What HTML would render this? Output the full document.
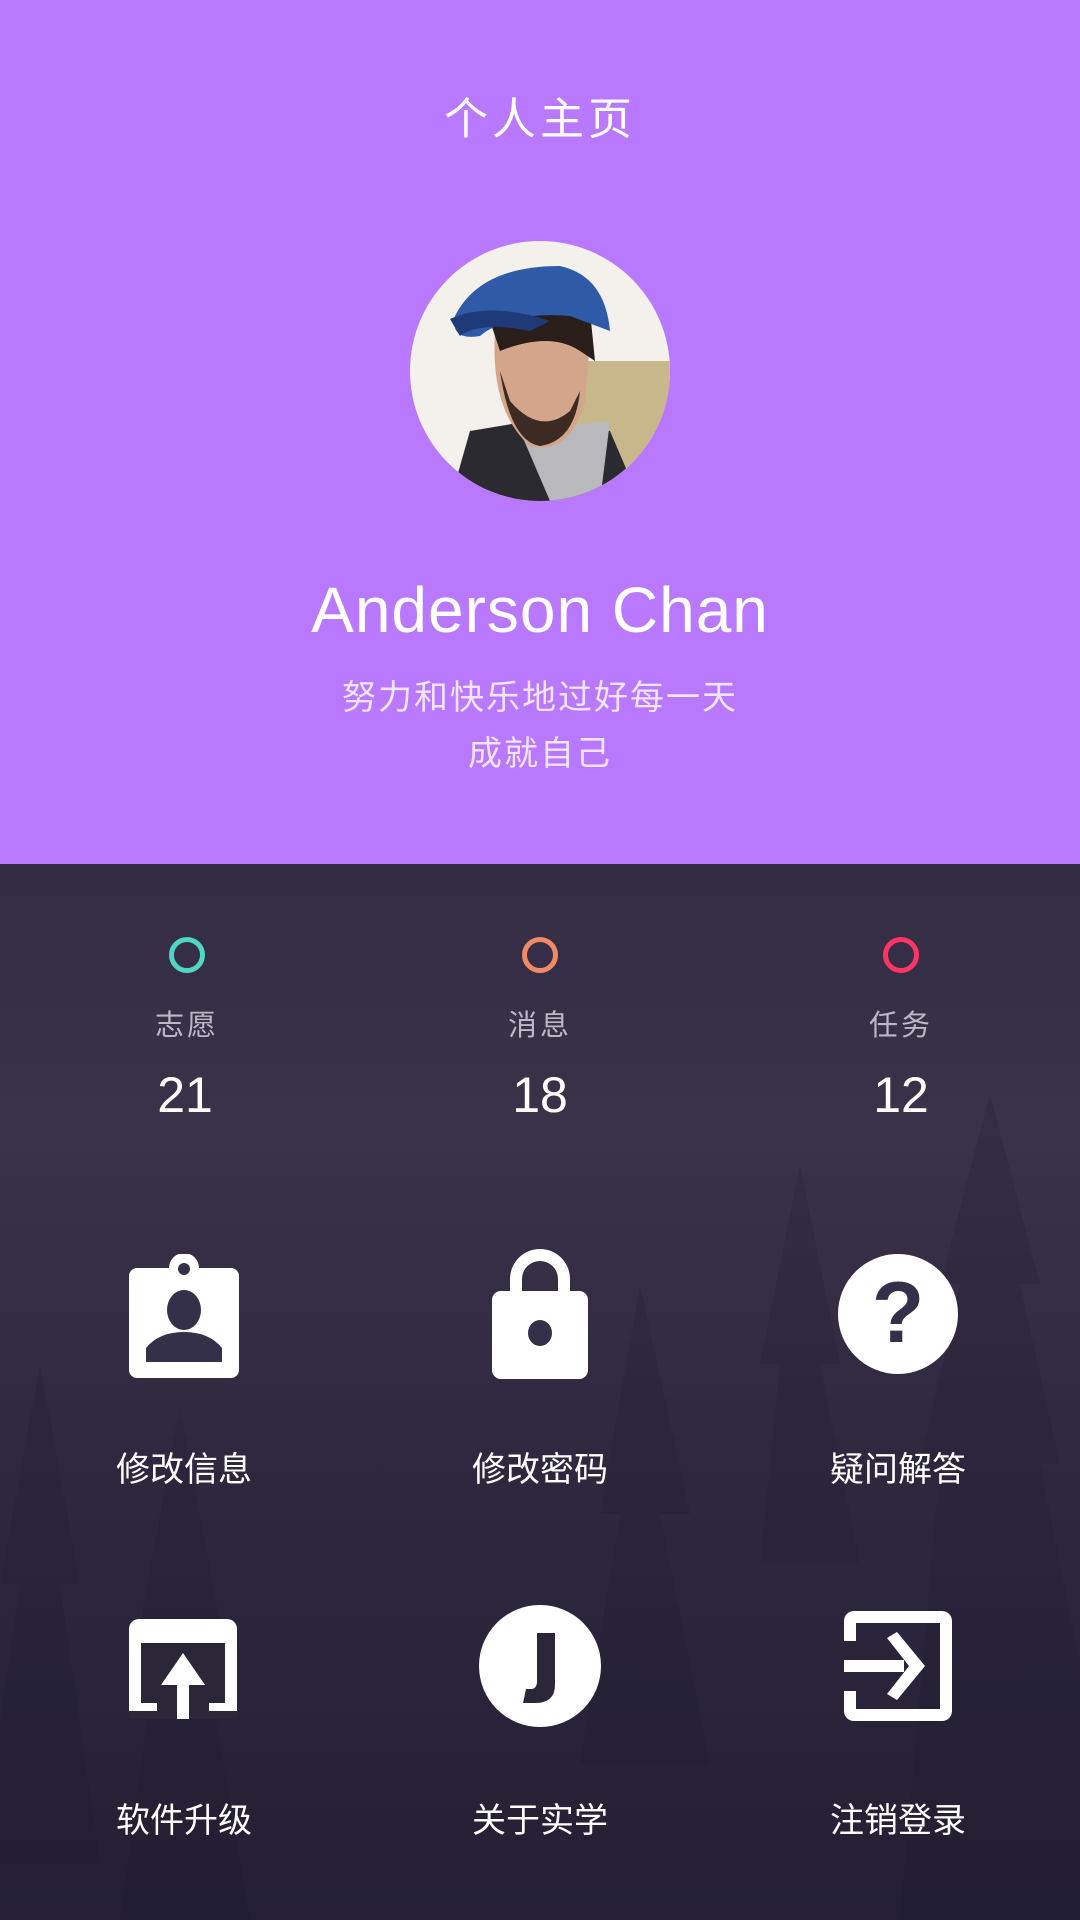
<!DOCTYPE html>
<html><head><meta charset="utf-8"><style>
*{margin:0;padding:0;box-sizing:border-box}
body{width:1080px;height:1920px;overflow:hidden;font-family:"Liberation Sans","Noto Sans CJK SC",sans-serif;position:relative}
.top{position:absolute;left:0;top:0;width:1080px;height:864px;background:#b879ff}
.bot{position:absolute;left:0;top:864px;width:1080px;height:1056px;background:linear-gradient(180deg,#332c44 0%,#3a3249 25%,#2f2940 55%,#241f33 100%)}
.t{position:absolute;left:0;width:1080px;text-align:center;color:#fff;white-space:nowrap}
.c{position:absolute;text-align:center;white-space:nowrap;transform:translateX(-50%)}
.ring{position:absolute;width:36px;height:36px;border-radius:50%;border:5px solid;transform:translate(-50%,-50%)}
svg.ic{position:absolute;transform:translate(-50%,-50%)}
</style></head><body>
<div class="top"></div>
<div class="bot">
<svg width="1080" height="1056" style="position:absolute;left:0;top:0;opacity:.18">
<g fill="#1e1a2a">
<path d="M990 230 L1040 420 L1020 420 L1060 600 L1040 600 L1080 800 L1080 1056 L900 1056 L940 600 L920 600 L960 420 L940 420Z"/>
<path d="M800 300 L840 500 L820 500 L860 700 L760 700 L780 500 L760 500Z"/>
<path d="M640 420 L690 650 L660 650 L710 900 L580 900 L620 650 L600 650Z"/>
<path d="M40 500 L80 720 L60 720 L100 1000 L-20 1000 L20 720 L0 720Z"/>
<path d="M180 540 L220 760 L200 760 L250 1056 L120 1056 L160 760 L140 760Z"/>
</g></svg>
</div>
<div class="t" style="top:90px;font-size:44px;letter-spacing:4px;line-height:60px">个人主页</div>
<svg style="position:absolute;left:410px;top:241px" width="260" height="260" viewBox="0 0 260 260">
<defs><clipPath id="cp"><circle cx="130" cy="130" r="130"/></clipPath></defs>
<circle cx="130" cy="130" r="130" fill="#f4f1ec"/>
<g clip-path="url(#cp)">
<rect x="150" y="120" width="110" height="140" fill="#c8b78a"/>
<path d="M40 260 L60 190 L120 180 L200 190 L230 260Z" fill="#2a2a30"/>
<path d="M110 190 L140 260 L190 260 L200 180Z" fill="#b9b9bd"/>
<path d="M85 90 Q80 170 120 205 Q160 215 175 160 L180 100Z" fill="#d3a58a"/>
<path d="M90 130 Q100 200 130 205 Q165 200 170 150 L160 170 Q130 195 100 160Z" fill="#3d2a22"/>
<path d="M80 80 Q90 60 180 70 L185 120 L170 110 Q140 90 90 110Z" fill="#2a1e1a"/>
<path d="M45 75 Q70 25 150 25 Q195 35 200 90 L160 75 Q100 70 70 95 Q40 100 45 75Z" fill="#2f5aa8"/>
<path d="M40 78 Q80 60 140 80 L120 90 Q70 80 50 95Z" fill="#1e3a78"/>
</g></svg>
<div class="t" style="top:572px;font-size:64px;line-height:76px;letter-spacing:1px">Anderson Chan</div>
<div class="t" style="top:674px;font-size:34px;line-height:48px;color:#f0e4ff;letter-spacing:2px">努力和快乐地过好每一天</div>
<div class="t" style="top:730px;font-size:34px;line-height:48px;color:#f0e4ff;letter-spacing:2px">成就自己</div>

<div class="ring" style="left:187px;top:955px;border-color:#4fd6c4"></div>
<div class="ring" style="left:540px;top:955px;border-color:#f08a64"></div>
<div class="ring" style="left:901px;top:955px;border-color:#ff3366"></div>
<div class="c" style="left:187px;top:1002px;font-size:29px;color:#bdb8c4;letter-spacing:3px">志愿</div>
<div class="c" style="left:540px;top:1002px;font-size:29px;color:#bdb8c4;letter-spacing:3px">消息</div>
<div class="c" style="left:901px;top:1002px;font-size:29px;color:#bdb8c4;letter-spacing:3px">任务</div>
<div class="c" style="left:185px;top:1066px;font-size:50px;color:#fff">21</div>
<div class="c" style="left:540px;top:1066px;font-size:50px;color:#fff">18</div>
<div class="c" style="left:901px;top:1066px;font-size:50px;color:#fff">12</div>

<svg class="ic" style="left:184px;top:1316px" width="110" height="124" viewBox="0 0 110 124">
<path d="M8 14 H40 A15 15 0 0 1 70 14 H102 A8 8 0 0 1 110 22 V116 A8 8 0 0 1 102 124 H8 A8 8 0 0 1 0 116 V22 A8 8 0 0 1 8 14Z" fill="#fff"/>
<circle cx="55" cy="15" r="6" fill="#35304a"/>
<ellipse cx="55" cy="56" rx="17" ry="20" fill="#35304a"/>
<path d="M17 108 V94 Q30 78 55 78 Q80 78 93 94 V108Z" fill="#35304a"/>
</svg>
<svg class="ic" style="left:540px;top:1314px" width="96" height="130" viewBox="0 0 96 130">
<path d="M18 42 V30 A30 30 0 0 1 78 30 V42 H66 V30 A18 18 0 0 0 30 30 V42Z" fill="#fff"/>
<rect x="0" y="42" width="96" height="88" rx="9" fill="#fff"/>
<ellipse cx="48" cy="84" rx="12" ry="13" fill="#35304a"/>
</svg>
<svg class="ic" style="left:898px;top:1314px" width="120" height="120" viewBox="0 0 120 120">
<circle cx="60" cy="60" r="60" fill="#fff"/>
<text x="60" y="88" text-anchor="middle" font-family="Liberation Sans" font-weight="bold" font-size="86" fill="#35304a">?</text>
</svg>
<div class="c" style="left:184px;top:1442px;font-size:34px;color:#fff">修改信息</div>
<div class="c" style="left:540px;top:1442px;font-size:34px;color:#fff">修改密码</div>
<div class="c" style="left:898px;top:1442px;font-size:34px;color:#fff">疑问解答</div>

<svg class="ic" style="left:183px;top:1669px" width="108" height="100" viewBox="0 0 108 100">
<rect x="0" y="0" width="108" height="98" rx="10" fill="#fff"/>
<rect x="12" y="24" width="84" height="64" fill="#2c2639"/>
<rect x="0" y="88" width="108" height="12" fill="#2c2639"/>
<rect x="0" y="88" width="12" height="4" fill="#fff"/>
<rect x="96" y="88" width="12" height="4" fill="#fff"/>
<rect x="12" y="84" width="16" height="8" fill="#fff"/>
<rect x="80" y="84" width="16" height="8" fill="#fff"/>
<path d="M54 34 L76 66 H60 V100 H48 V66 H32Z" fill="#fff"/>
<rect x="36" y="66" width="12" height="34" fill="#2c2639"/>
<rect x="60" y="66" width="12" height="34" fill="#2c2639"/>
<rect x="48" y="66" width="12" height="34" fill="#fff"/>
</svg>
<svg class="ic" style="left:540px;top:1666px" width="122" height="122" viewBox="0 0 122 122">
<circle cx="61" cy="61" r="61" fill="#fff"/>
<path d="M58 28 H76 V80 Q76 98 56 98 H44 L47 84 H52 Q58 84 58 76Z" fill="#2c2639"/>
</svg>
<svg class="ic" style="left:898px;top:1666px" width="108" height="110" viewBox="0 0 108 110">
<path d="M0 10 A10 10 0 0 1 10 0 H98 A10 10 0 0 1 108 10 V100 A10 10 0 0 1 98 110 H10 A10 10 0 0 1 0 100 V80 H12 V98 H96 V12 H12 V30 H0Z" fill="#fff"/>
<path d="M0 49 H60 V61 H0Z" fill="#fff"/>
<path d="M43 27 L53 21 L81 55 L53 89 L43 83 L65 55Z" fill="#fff"/>
</svg>
<div class="c" style="left:184px;top:1793px;font-size:34px;color:#fff">软件升级</div>
<div class="c" style="left:540px;top:1793px;font-size:34px;color:#fff">关于实学</div>
<div class="c" style="left:898px;top:1793px;font-size:34px;color:#fff">注销登录</div>
</body></html>
